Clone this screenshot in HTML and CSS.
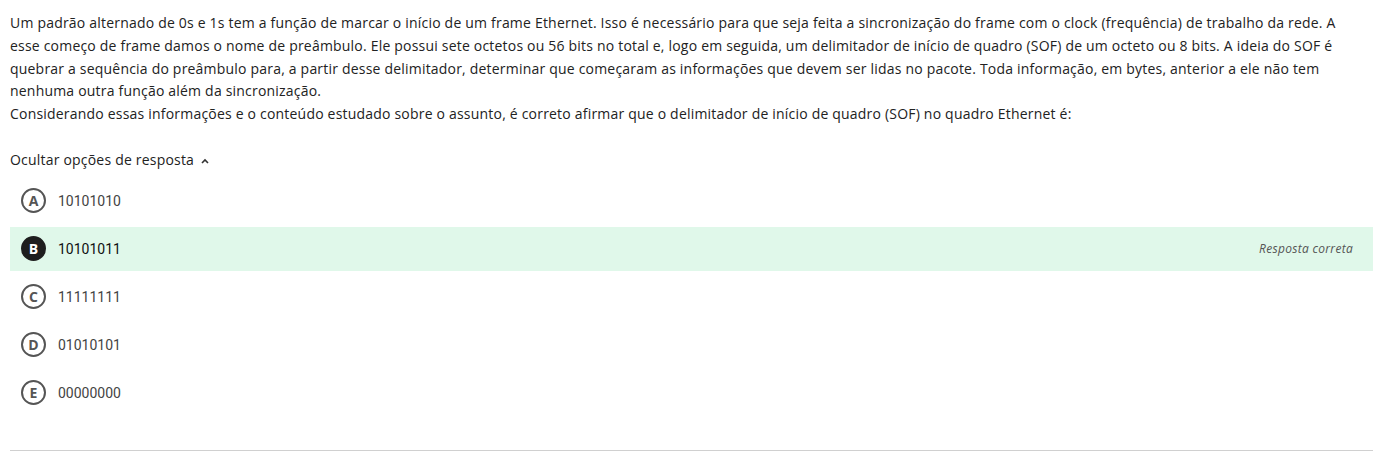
FILE: index.html
```html
<!DOCTYPE html>
<html lang="pt">
<head>
<meta charset="utf-8">
<link rel="stylesheet" href="styles.css">
</head>
<body>
<div class="page">
  <div class="statement">
    <p>Um padrão alternado de 0s e 1s tem a função de marcar o início de um frame Ethernet. Isso é necessário para que seja feita a sincronização do frame com o clock (frequência) de trabalho da rede. A esse começo de frame damos o nome de preâmbulo. Ele possui sete octetos ou 56 bits no total e, logo em seguida, um delimitador de início de quadro (SOF) de um octeto ou 8 bits. A ideia do SOF é quebrar a sequência do preâmbulo para, a partir desse delimitador, determinar que começaram as informações que devem ser lidas no pacote. Toda informação, em bytes, anterior a ele não tem nenhuma outra função além da sincronização.</p>
    <p>Considerando essas informações e o conteúdo estudado sobre o assunto, é correto afirmar que o delimitador de início de quadro (SOF) no quadro Ethernet é:</p>
  </div>
  <div class="toggle">Ocultar opções de resposta
    <svg class="chev" width="8" height="6" viewBox="0 0 8 6"><path d="M1 5 L4 2 L7 5" fill="none" stroke="#333" stroke-width="1.6"/></svg>
  </div>
  <ul class="options">
    <li class="option"><span class="letter">A</span><span class="value">10101010</span></li>
    <li class="option correct"><span class="letter">B</span><span class="value">10101011</span><span class="tag">Resposta correta</span></li>
    <li class="option"><span class="letter">C</span><span class="value">11111111</span></li>
    <li class="option"><span class="letter">D</span><span class="value">01010101</span></li>
    <li class="option"><span class="letter">E</span><span class="value">00000000</span></li>
  </ul>
  <hr class="sep">
</div>
</body>
</html>
```
FILE: styles.css
```css
html, body { margin: 0; padding: 0; background: #fff; }
.page {
  padding: 12px 10px 0 10px;
  font-family: "Open Sans", "Liberation Sans", sans-serif;
  color: #222;
}
.statement {
  padding-right: 30px;
}
.statement p {
  margin: 0;
  font-size: 14px;
  letter-spacing: 0.2px;
  line-height: 22.75px;
}
.toggle {
  margin-top: 25px;
  font-size: 14px;
  letter-spacing: 0.2px;
  line-height: 18px;
  display: flex;
  align-items: center;
  gap: 7px;
  color: #222;
}
.chev { margin-top: 2px; }
.options {
  list-style: none;
  margin: 10px 0 0 0;
  padding: 0;
  display: flex;
  flex-direction: column;
  gap: 4px;
}
.option {
  height: 44px;
  display: flex;
  align-items: center;
  padding: 0 20px 0 11px;
}
.letter {
  width: 21px;
  height: 21px;
  border: 2px solid #555;
  border-radius: 50%;
  display: flex;
  align-items: center;
  justify-content: center;
  font-family: "Open Sans", sans-serif;
  font-weight: 700;
  font-size: 14px;
  color: #555;
  flex: none;
}
.value {
  margin-left: 12px;
  font-family: Roboto, "Liberation Sans", sans-serif;
  font-size: 14px;
  color: #444;
}
.correct { background: #e0f8ea; }
.correct .letter { background: #1e1e1e; border-color: #1e1e1e; color: #fff; }
.correct .value { color: #111; }
.tag {
  margin-left: auto;
  font-style: italic;
  font-size: 12px;
  letter-spacing: 0.3px;
  color: #555;
}
.sep {
  margin: 35px 0 0 0;
  border: 0;
  border-top: 1px solid #d0d0d0;
}
```
